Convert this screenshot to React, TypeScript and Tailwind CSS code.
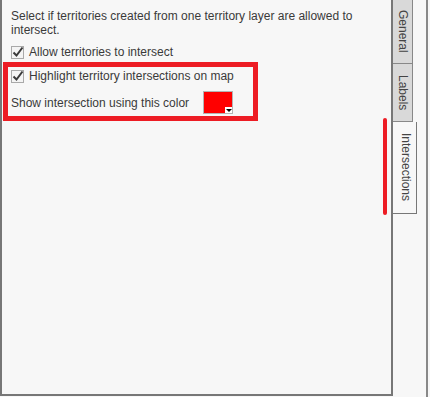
import React from 'react';

function CheckBox() {
  return (
    <svg width="13" height="13" viewBox="0 0 13 13" className="shrink-0">
      <rect x="0.5" y="0.5" width="12" height="12" fill="#f4f4f4" stroke="#a9a9a9" />
      <polyline points="2.5,6.5 5.5,9.5 11.5,1.5" fill="none" stroke="#3a3a3a" strokeWidth="2" />
    </svg>
  );
}

function ColorSwatch() {
  return (
    <div className="relative w-[30px] h-[23px] border border-[#b4b4b4] bg-[#ff0000]">
      <div className="absolute right-0 bottom-0 w-[7px] h-[6px] bg-white flex items-center justify-center">
        <div className="w-0 h-0 border-l-[3px] border-r-[3px] border-t-[3px] border-l-transparent border-r-transparent border-t-black" />
      </div>
    </div>
  );
}

export default function App() {
  return (
    <div
      className="relative w-[430px] h-[397px] bg-[#f7f7f7] flex text-[12px] text-[#3a3a3a] overflow-hidden"
      style={{ fontFamily: '"Liberation Sans", Arial, sans-serif' }}
    >
      {/* options panel */}
      <div className="w-[393px] h-[396px] border-l-2 border-r-2 border-b-2 border-[#777777] flex flex-col px-[9px] pt-[9px]">
        <p className="leading-[14px]">
          Select if territories created from one territory layer are allowed to intersect.
        </p>
        <div className="mt-[5px] h-[20px] flex items-center gap-[5px]">
          <CheckBox />
          <span className="leading-[14px]">Allow territories to intersect</span>
        </div>
        <div className="-ml-[8px] w-[255px] h-[59px] border-[5px] border-[#ed1c24] pl-[3px] flex flex-col">
          <div className="h-[18px] flex items-center gap-[5px]">
            <CheckBox />
            <span className="leading-[14px]">Highlight territory intersections on map</span>
          </div>
          <div className="mt-[6px] h-[23px] flex items-center">
            <span className="w-[192px] leading-[14px]">Show intersection using this color</span>
            <ColorSwatch />
          </div>
        </div>
      </div>

      {/* tabs */}
      <div className="w-[35px] h-[397px] border-r-2 border-[#888888] flex flex-col text-[#444444]">
        <div className="h-[64px] w-[20px] bg-[#d9d9d9] border-r border-b border-[#888888] flex items-center justify-center">
          <span className="[writing-mode:vertical-rl] leading-[14px]">General</span>
        </div>
        <div className="h-[58px] w-[20px] bg-[#d9d9d9] border-r border-b border-[#888888] flex items-center justify-center">
          <span className="[writing-mode:vertical-rl] leading-[14px]">Labels</span>
        </div>
        <div className="h-[92px] w-[24px] bg-[#f7f7f7] border-r border-b border-[#777777] flex items-center justify-center">
          <span className="[writing-mode:vertical-rl] leading-[14px] pl-[2px]">Intersections</span>
        </div>
      </div>

      {/* annotation marker */}
      <div className="absolute left-[383px] top-[118px] w-[4px] h-[97px] rounded-full bg-[#ed1c24]" />
    </div>
  );
}
